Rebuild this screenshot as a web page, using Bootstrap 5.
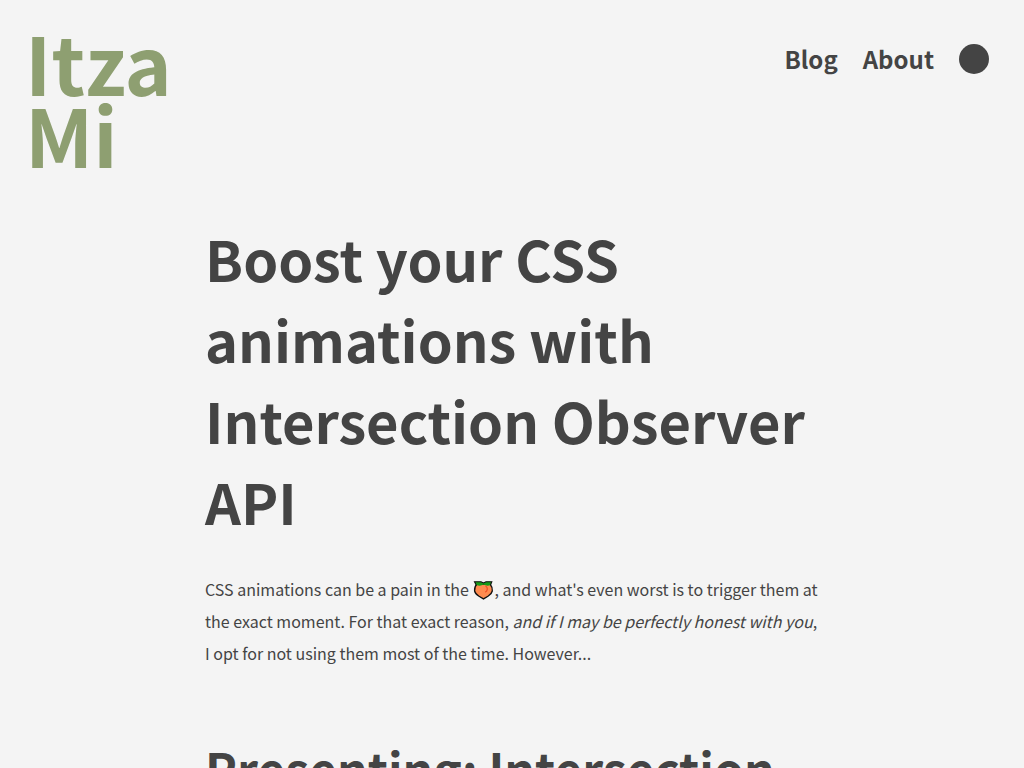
<!DOCTYPE html>
<html lang="en">
<head>
<meta charset="utf-8">
<meta name="viewport" content="width=device-width, initial-scale=1">
<title>Boost your CSS animations with Intersection Observer API</title>
<link href="https://cdn.jsdelivr.net/npm/bootstrap@5.3.0/dist/css/bootstrap.min.css" rel="stylesheet">
<style>
body { background: #f4f4f4; color: #444; font-family: "Noto Sans CJK JP", "Noto Sans", sans-serif; }
a { color: inherit; text-decoration: none; }
.site-header { padding: 25px 35px 0 25px; }
.brand { color: #8e9f71; font-size: 80px; line-height: 72px; font-weight: 700; }
.site-nav { gap: 25px; margin-top: 14px; font-size: 24px; line-height: 40px; font-weight: 700; }
.theme-toggle { width: 30px; height: 30px; background: #444; border: 0; }
.post { max-width: 614px; margin-top: 48px; }
.post h1 { font-size: 56px; line-height: 81px; font-weight: 700; margin-bottom: 32px; }
.post p { font-size: 16px; line-height: 32px; margin-bottom: 64px; }
.post h2 { font-size: 48px; line-height: 70px; font-weight: 700; }
.peach { width: 22px; height: 20px; vertical-align: -4px; }
</style>
</head>
<body>
<header class="site-header d-flex justify-content-between align-items-start">
<a class="brand" href="#">Itza<br>Mi</a>
<nav class="site-nav d-flex align-items-center" aria-label="Main">
<a href="#">Blog</a>
<a href="#">About</a>
<button type="button" class="theme-toggle rounded-circle p-0" aria-label="Toggle theme"></button>
</nav>
</header>
<main class="post mx-auto">
<h1>Boost your CSS animations with Intersection Observer API</h1>
<p>CSS animations can be a pain in the <svg class="peach" viewBox="0 0 22 20" role="img" aria-label="peach"><path d="M4 4C2 6 1.400 8.500 1.600 11C2 13 4 15 6 16.200L10.500 18.900L15 16.200C17 15 18.900 13 19.300 11C19.500 8.500 18.700 6 17 4Z" fill="#ff8b4f" stroke="#111" stroke-width="1.300"/><path d="M12.500 6C15 7.200 15 10.500 12.300 12.300" fill="none" stroke="#f04d24" stroke-width="1.200"/><path d="M1.500 1.700H8L10.500 3L13 1.700H18.800L17.500 5Q14 6.500 10.500 4.500Q7.500 6.500 3.200 5Z" fill="#169b18"/><path d="M3.200 5L1.500 1.700H8L10.500 3L13 1.700H18.800L17.500 5" fill="none" stroke="#111" stroke-width="1.100"/></svg>, and what's even worst is to trigger them at the exact moment. For that exact reason, <em>and if I may be perfectly honest with you</em>, I opt for not using them most of the time. However...</p>
<h2>Presenting: Intersection Observer API</h2>
</main>
<script src="https://cdn.jsdelivr.net/npm/bootstrap@5.3.0/dist/js/bootstrap.bundle.min.js"></script>
</body>
</html>
